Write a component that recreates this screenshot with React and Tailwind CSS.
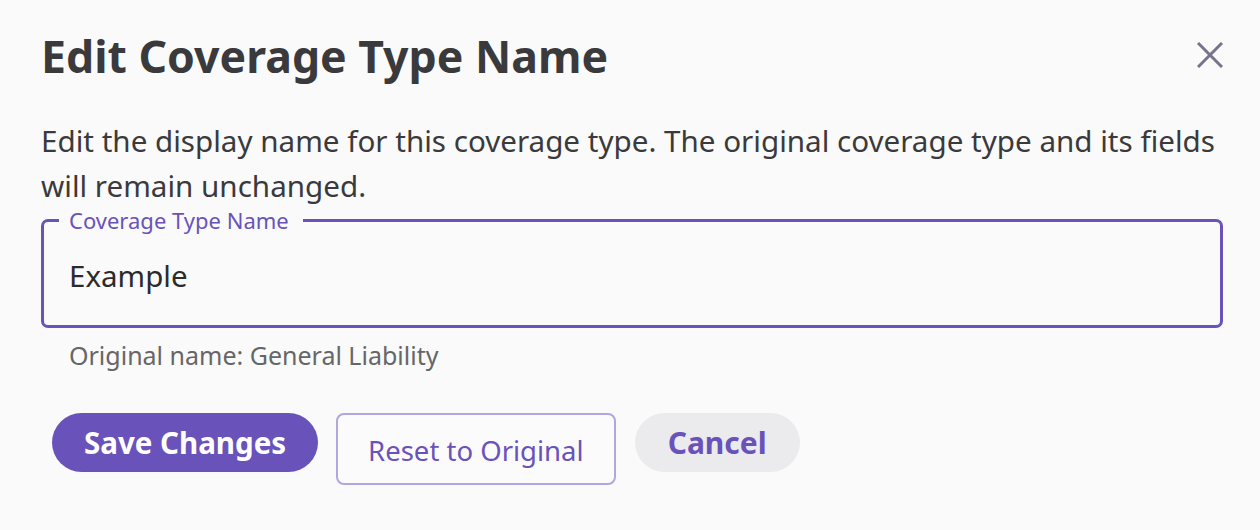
import React from "react";

export default function App() {
  return (
    <div
      className="w-[1260px] h-[530px] bg-[#fafafa] overflow-hidden pl-[41px] pr-[36px] pt-[31px]"
      style={{ fontFamily: '"Noto Sans", sans-serif' }}
    >
      <div className="flex items-center justify-between">
        <h1 className="text-[44.6px] leading-[50px] font-bold text-[#3a3a3c]">Edit Coverage Type Name</h1>
        <button className="w-[28px] h-[28px] flex items-center justify-center mb-[2px]">
          <svg width="26" height="26" viewBox="0 0 26 26">
            <line x1="1" y1="1" x2="25" y2="25" stroke="#77738b" strokeWidth="3" />
            <line x1="25" y1="1" x2="1" y2="25" stroke="#77738b" strokeWidth="3" />
          </svg>
        </button>
      </div>
      <p className="mt-[37px] -mr-[16px] text-[29.6px] leading-[45px] text-[#3a3a3c]">
        Edit the display name for this coverage type. The original coverage type and its fields will remain unchanged.
      </p>
      <fieldset className="mt-[0px] border-[3px] border-[#6a52bb] rounded-[7px] h-[120px] mr-[1px]">
        <legend className="ml-[15px] pl-[10px] pr-[14px] text-[22px] leading-[24px] text-[#6a52bb]">Coverage Type Name</legend>
        <div className="pl-[25px] pt-[25px] text-[29.5px] leading-[38px] text-[#2b2b2d]">Example</div>
      </fieldset>
      <div className="pl-[28px] mt-[11px] text-[25px] leading-[32px] text-[#666668]">Original name: General Liability</div>
      <div className="ml-[11px] mt-[42px] flex items-start gap-[18px]">
        <button className="h-[59px] px-[32px] rounded-full bg-[#6a52bb] text-white text-[29.5px] font-bold leading-[36px]">
          Save Changes
        </button>
        <button className="h-[72px] px-[30px] pt-[4px] rounded-[8px] border-2 border-[#b3a6e0] bg-[#fbfbfc] text-[#6a52bb] text-[27.5px] leading-[36px]">
          Reset to Original
        </button>
        <button className="h-[59px] px-[33px] rounded-full bg-[#ebebee] text-[#6a52bb] text-[30px] font-bold leading-[36px] ml-[1px]">
          Cancel
        </button>
      </div>
    </div>
  );
}
